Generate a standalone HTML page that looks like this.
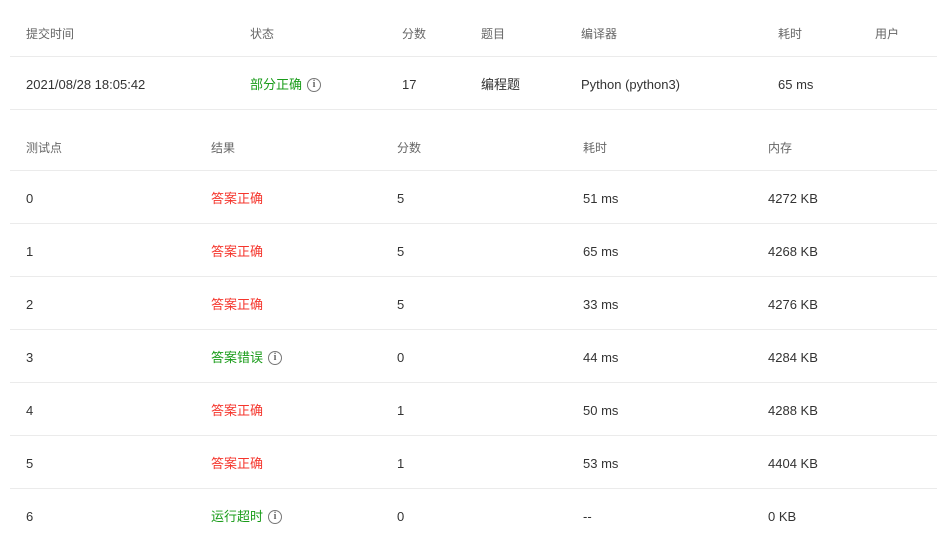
<!DOCTYPE html>
<html><head><meta charset="utf-8"><style>
body{margin:0;width:944px;height:537px;background:#fff;font-family:"Liberation Sans","Noto Sans CJK SC",sans-serif;overflow:hidden;position:relative}
.t{position:absolute;white-space:nowrap;transform:translateY(calc(-50% + 1px));line-height:16px}
.h{font-size:12px;color:#666}
.d{font-size:13px;color:#333}
.g{color:#1a9c1a;font-size:13px;display:flex;align-items:center}
.r{color:#f5362d;font-size:13px}
.l{position:absolute;left:10px;width:927px;height:1px;background:#ebebeb}
.i{display:inline-block;width:12px;height:12px;border:1px solid #777;border-radius:50%;font-size:10px;line-height:12px;text-align:center;color:#666;margin-left:5px;font-weight:bold;font-family:"Liberation Serif",serif}
</style></head><body>
<div class="t h" style="left:26px;top:33px">提交时间</div>
<div class="t h" style="left:250px;top:33px">状态</div>
<div class="t h" style="left:402px;top:33px">分数</div>
<div class="t h" style="left:481px;top:33px">题目</div>
<div class="t h" style="left:581px;top:33px">编译器</div>
<div class="t h" style="left:778px;top:33px">耗时</div>
<div class="t h" style="left:875px;top:33px">用户</div>
<div class="l" style="top:56px"></div>
<div class="t d" style="left:26px;top:84px">2021/08/28 18:05:42</div>
<div class="t g" style="left:250px;top:84px">部分正确<span class="i">i</span></div>
<div class="t d" style="left:402px;top:84px">17</div>
<div class="t d" style="left:481px;top:84px">编程题</div>
<div class="t d" style="left:581px;top:84px">Python (python3)</div>
<div class="t d" style="left:778px;top:84px">65 ms</div>
<div class="l" style="top:109px"></div>
<div class="t h" style="left:26px;top:147px">测试点</div>
<div class="t h" style="left:211px;top:147px">结果</div>
<div class="t h" style="left:397px;top:147px">分数</div>
<div class="t h" style="left:583px;top:147px">耗时</div>
<div class="t h" style="left:768px;top:147px">内存</div>
<div class="l" style="top:170px"></div>

<div class="t d" style="left:26px;top:198px">0</div><div class="t r" style="left:211px;top:198px">答案正确</div><div class="t d" style="left:397px;top:198px">5</div><div class="t d" style="left:583px;top:198px">51 ms</div><div class="t d" style="left:768px;top:198px">4272 KB</div>
<div class="l" style="top:223px"></div>
<div class="t d" style="left:26px;top:251px">1</div><div class="t r" style="left:211px;top:251px">答案正确</div><div class="t d" style="left:397px;top:251px">5</div><div class="t d" style="left:583px;top:251px">65 ms</div><div class="t d" style="left:768px;top:251px">4268 KB</div>
<div class="l" style="top:276px"></div>
<div class="t d" style="left:26px;top:304px">2</div><div class="t r" style="left:211px;top:304px">答案正确</div><div class="t d" style="left:397px;top:304px">5</div><div class="t d" style="left:583px;top:304px">33 ms</div><div class="t d" style="left:768px;top:304px">4276 KB</div>
<div class="l" style="top:329px"></div>
<div class="t d" style="left:26px;top:357px">3</div><div class="t g" style="left:211px;top:357px">答案错误<span class="i">i</span></div><div class="t d" style="left:397px;top:357px">0</div><div class="t d" style="left:583px;top:357px">44 ms</div><div class="t d" style="left:768px;top:357px">4284 KB</div>
<div class="l" style="top:382px"></div>
<div class="t d" style="left:26px;top:410px">4</div><div class="t r" style="left:211px;top:410px">答案正确</div><div class="t d" style="left:397px;top:410px">1</div><div class="t d" style="left:583px;top:410px">50 ms</div><div class="t d" style="left:768px;top:410px">4288 KB</div>
<div class="l" style="top:435px"></div>
<div class="t d" style="left:26px;top:463px">5</div><div class="t r" style="left:211px;top:463px">答案正确</div><div class="t d" style="left:397px;top:463px">1</div><div class="t d" style="left:583px;top:463px">53 ms</div><div class="t d" style="left:768px;top:463px">4404 KB</div>
<div class="l" style="top:488px"></div>
<div class="t d" style="left:26px;top:516px">6</div><div class="t g" style="left:211px;top:516px">运行超时<span class="i">i</span></div><div class="t d" style="left:397px;top:516px">0</div><div class="t d" style="left:583px;top:516px">--</div><div class="t d" style="left:768px;top:516px">0 KB</div>
</body></html>
